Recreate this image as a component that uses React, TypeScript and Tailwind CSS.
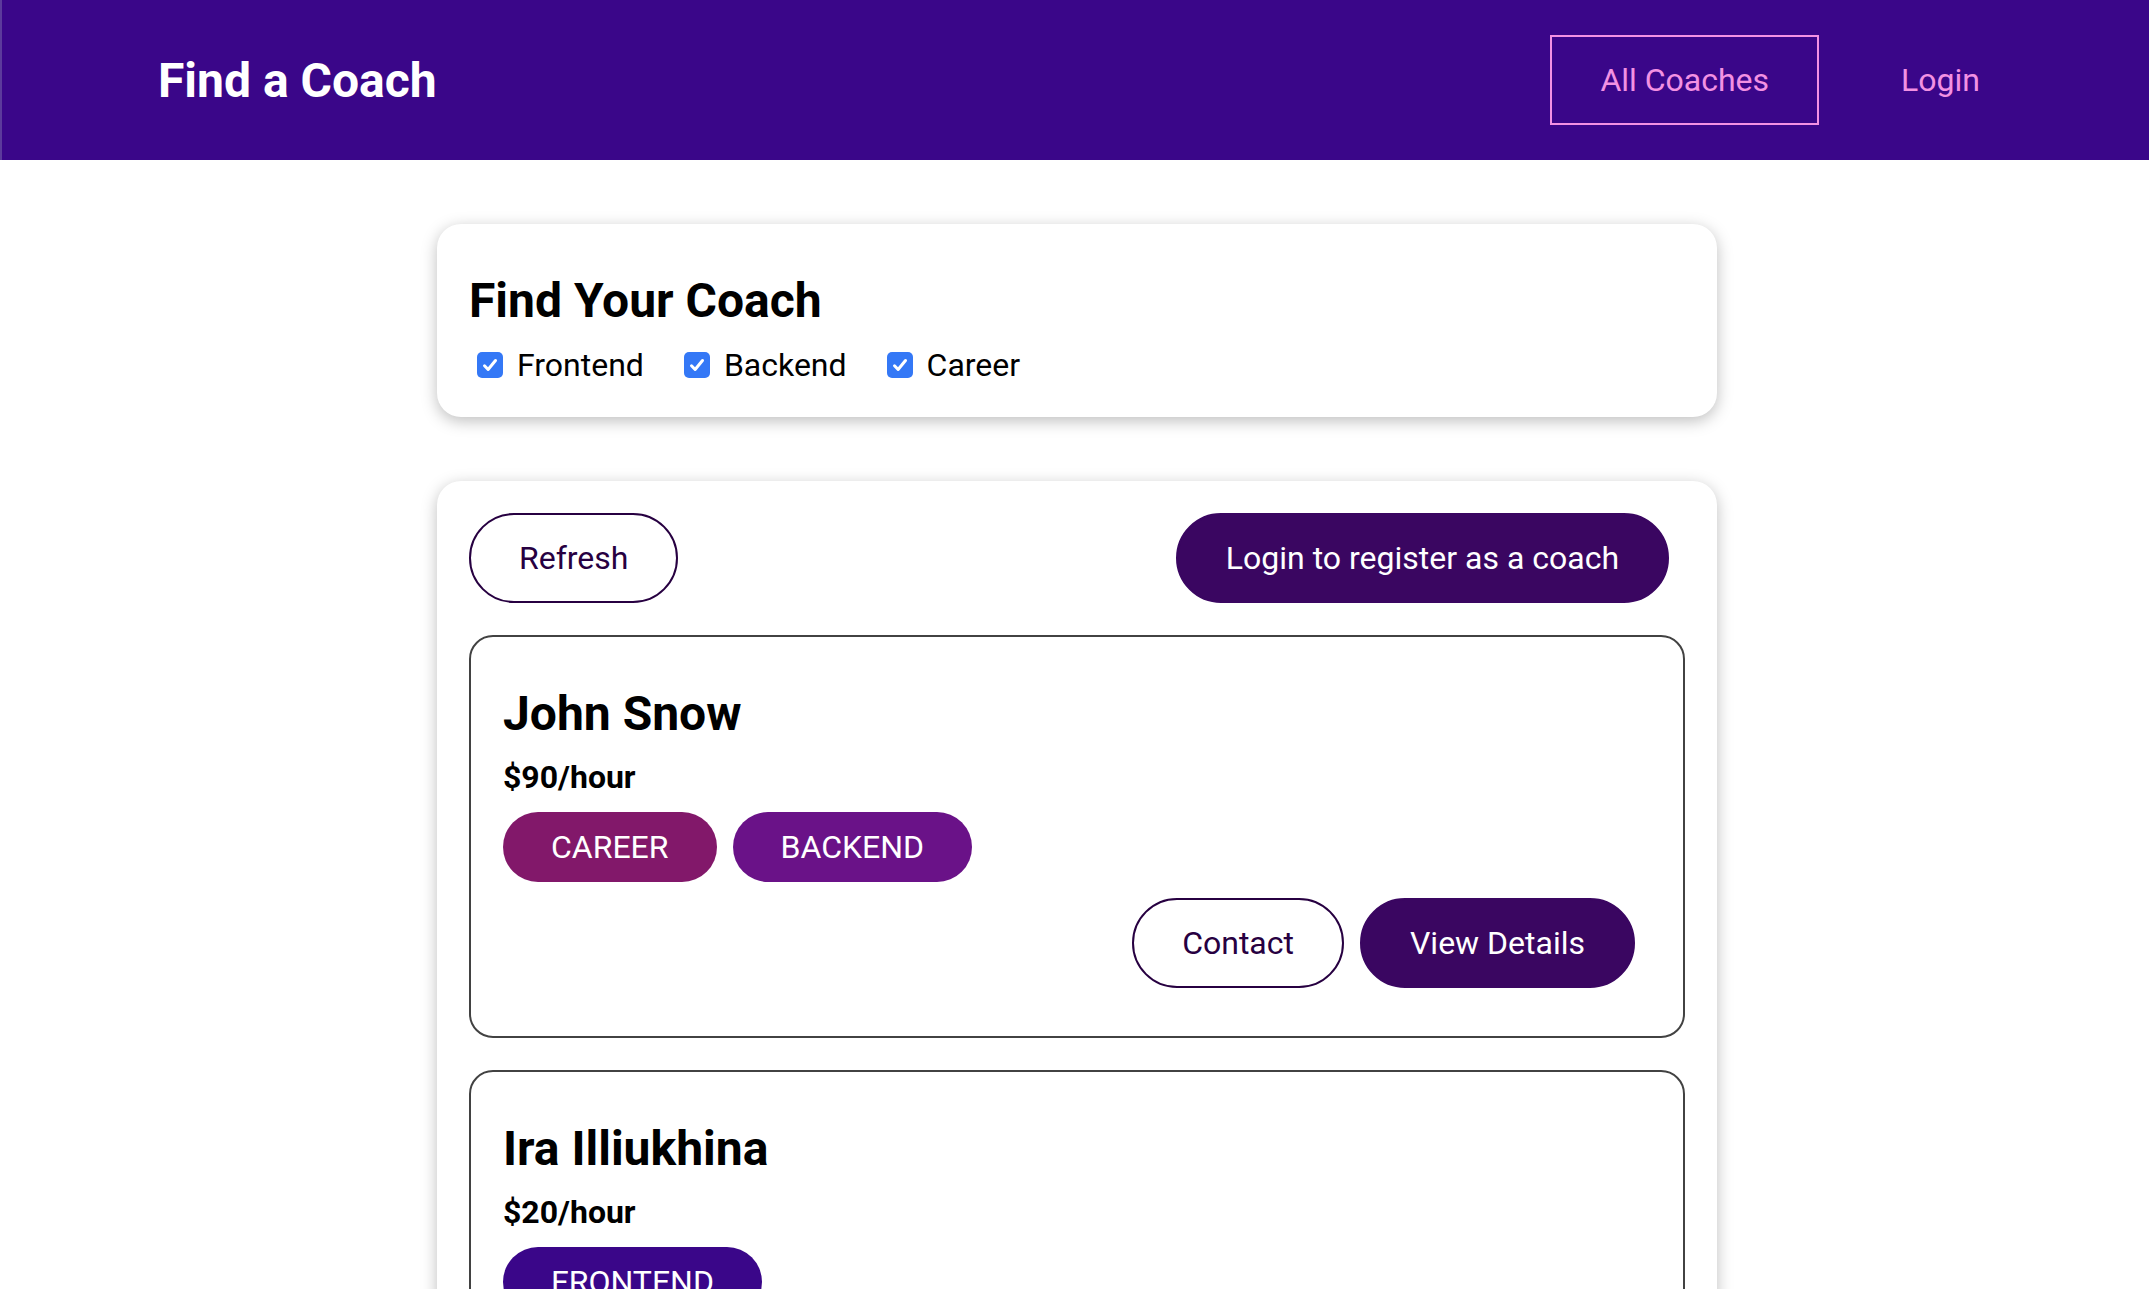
import { useState } from "react";

type Area = "frontend" | "backend" | "career";

const coaches: { id: string; firstName: string; lastName: string; rate: number; areas: Area[] }[] = [
  { id: "c1", firstName: "John", lastName: "Snow", rate: 90, areas: ["career", "backend"] },
  { id: "c2", firstName: "Ira", lastName: "Illiukhina", rate: 20, areas: ["frontend"] },
];

const badgeColors: Record<Area, string> = {
  frontend: "bg-[#3a0689]",
  backend: "bg-[#6a1288]",
  career: "bg-[#82186a]",
};

const App = () => {
  const [filters, setFilters] = useState<Record<Area, boolean>>({
    frontend: true,
    backend: true,
    career: true,
  });

  const toggle = (area: Area) => setFilters({ ...filters, [area]: !filters[area] });

  const visible = coaches.filter((c) => c.areas.some((a) => filters[a]));

  return (
    <div className="min-h-screen bg-white text-black font-['Roboto',sans-serif] leading-[normal]">
      {/* Header */}
      <header className="w-full h-[160px] bg-[#3a0689] border-l-2 border-[#5c3a9c] flex items-center pl-[106px] pr-[103px]">
        <nav className="flex-1 flex justify-between items-center">
          <h1 className="m-0">
            <a href="#" className="inline-block px-12 py-6 border-2 border-transparent text-white text-[48px] font-bold">
              Find a Coach
            </a>
          </h1>
          <ul className="flex items-center">
            <li className="mx-4">
              <a href="#" className="inline-block px-12 py-6 border-2 border-[#f391e3] text-[#f391e3] text-[32px]">
                All Coaches
              </a>
            </li>
            <li className="mx-4">
              <a href="#" className="inline-block px-12 py-6 border-2 border-transparent text-[#f391e3] text-[32px]">
                Login
              </a>
            </li>
          </ul>
        </nav>
      </header>

      <main className="flex flex-col gap-16 py-16 pl-[5px]">
        {/* Filter */}
        <section className="w-[1280px] mx-auto bg-white rounded-3xl p-8 shadow-[0_4px_16px_rgba(0,0,0,0.26)]">
          <h2 className="text-[48px] font-bold my-4">Find Your Coach</h2>
          <div className="flex items-center text-[32px] mt-[2px]">
            {(["frontend", "backend", "career"] as Area[]).map((area) => (
              <span key={area} className="flex items-center mr-8 cursor-pointer" onClick={() => toggle(area)}>
                <span
                  className={
                    filters[area]
                      ? "ml-2 mr-1.5 my-[7px] w-[26px] h-[26px] rounded-[5px] bg-[#3478f6] flex items-center justify-center"
                      : "ml-2 mr-1.5 my-[7px] w-[26px] h-[26px] rounded-[5px] border-2 border-[#767676] bg-white"
                  }
                >
                  {filters[area] && (
                    <svg viewBox="0 0 16 16" className="w-[20px] h-[20px]">
                      <path d="M3.6 8.6l2.9 3 5.9-7.2" stroke="white" strokeWidth="2.4" fill="none" strokeLinecap="round" strokeLinejoin="round" />
                    </svg>
                  )}
                </span>
                <label className="ml-2 capitalize">{area}</label>
              </span>
            ))}
          </div>
        </section>

        {/* Coach list */}
        <section className="w-[1280px] mx-auto bg-white rounded-3xl p-8 shadow-[0_4px_16px_rgba(0,0,0,0.26)]">
          <div className="flex justify-between">
            <button className="px-12 py-6 mr-4 rounded-[60px] border-2 border-[#270041] text-[#270041] text-[32px] bg-transparent">
              Refresh
            </button>
            <a href="#" className="inline-block px-12 py-6 mr-4 rounded-[60px] border-2 border-[#3a0661] bg-[#3a0661] text-white text-[32px]">
              Login to register as a coach
            </a>
          </div>
          <ul className="flex flex-col gap-8 mt-8">
            {visible.map((c) => (
              <li key={c.id} className="border-2 border-[#424242] rounded-3xl p-8">
                <h3 className="text-[48px] font-bold my-4">
                  {c.firstName} {c.lastName}
                </h3>
                <h4 className="text-[32px] font-bold my-4">${c.rate}/hour</h4>
                <div className="flex my-4">
                  {c.areas.map((a) => (
                    <div key={a} className={`${badgeColors[a]} text-white text-[32px] uppercase px-12 py-4 mr-4 rounded-[60px]`}>
                      {a}
                    </div>
                  ))}
                </div>
                <div className="flex justify-end my-4">
                  <a href="#" className="inline-block px-12 py-6 mr-4 rounded-[60px] border-2 border-[#270041] text-[#270041] text-[32px]">
                    Contact
                  </a>
                  <a href="#" className="inline-block px-12 py-6 mr-4 rounded-[60px] border-2 border-[#3a0661] bg-[#3a0661] text-white text-[32px]">
                    View Details
                  </a>
                </div>
              </li>
            ))}
          </ul>
        </section>
      </main>
    </div>
  );
};

export default App;
